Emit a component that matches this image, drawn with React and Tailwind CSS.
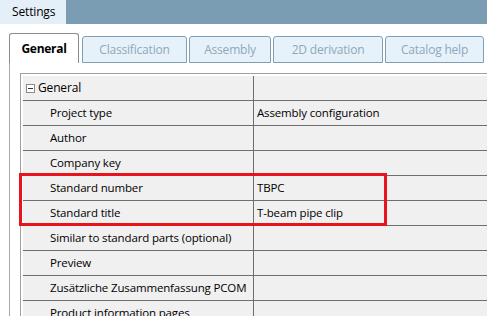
import React from 'react';

const tabs = [
  { label: 'Classification', w: 'w-[105px]' },
  { label: 'Assembly', w: 'w-[82px]' },
  { label: '2D derivation', w: 'w-[110px]' },
  { label: 'Catalog help', w: 'w-[99px]' },
];

const rows = [
  ['Project type', 'Assembly configuration'],
  ['Author', ''],
  ['Company key', ''],
  ['Standard number', 'TBPC'],
  ['Standard title', 'T-beam pipe clip'],
  ['Similar to standard parts (optional)', ''],
  ['Preview', ''],
  ['Zusätzliche Zusammenfassung PCOM', ''],
  ['Product information pages', ''],
];

function MinusBox() {
  return (
    <svg width="9" height="9" viewBox="0 0 9 9" className="shrink-0">
      <rect x="0.5" y="0.5" width="8" height="8" fill="#fff" stroke="#8a8a8a" />
      <path d="M2 4.5h5" stroke="#333" />
    </svg>
  );
}

export default function App() {
  return (
    <div
      className="relative w-[487px] h-[316px] overflow-hidden bg-white text-black text-[11.5px] tracking-[-0.15px]"
      style={{ fontFamily: '"Open Sans", "Noto Sans", sans-serif' }}
    >
      {/* top strip */}
      <div className="flex h-[24px]">
        <div className="w-[66px] bg-[#e5eff8] flex items-center pl-[12px] text-[12px]">Settings</div>
        <div className="flex-1 bg-[#7a9db3]" />
      </div>

      {/* tabs */}
      <div className="flex items-start pl-[9px] pt-[9px] h-[39px]">
        <div className="w-[70px] h-[30px] bg-white border border-b-0 border-[#8c8c8c] rounded-t-[3px] flex items-center justify-center font-bold text-[12px] tracking-[-0.3px] mr-[3px]">
          General
        </div>
        {tabs.map((t) => (
          <div
            key={t.label}
            className={`${t.w} h-[27px] mt-[3px] mr-[2px] bg-[#e6f1f9] border border-[#7f9fb6] rounded-t-[3px] flex items-center justify-center text-[#8ea8bb] text-[12px] tracking-[-0.2px]`}
          >
            {t.label}
          </div>
        ))}
      </div>

      {/* panel */}
      <div className="ml-[9px] border-l border-[#a8a8a8] pt-[10px] pl-[10px] h-[253px]">
        <div className="border-l border-t border-[#a0a0a0] bg-white pt-[2px] pl-[2px] h-full">
          <div className="flex h-[25px] border-b border-[#6e6e6e] bg-[#f0f0f0]">
            <div className="w-[230px] flex items-center gap-[3px] pl-[3px] text-[12px]">
              <MinusBox />
              <span>General</span>
            </div>
            <div className="flex-1 border-l border-[#6e6e6e]" />
          </div>
          {rows.map(([k, v]) => (
            <div key={k} className="flex h-[25px] border-b border-[#6e6e6e] bg-[#f0f0f0]">
              <div className="w-[230px] flex items-center pl-[27px] whitespace-nowrap overflow-hidden">{k}</div>
              <div className="flex-1 border-l border-[#6e6e6e] flex items-center pl-[3px] whitespace-nowrap">{v}</div>
            </div>
          ))}
        </div>
      </div>

      {/* highlight */}
      <div className="absolute left-[19px] top-[173px] w-[368px] h-[53px] border-[3px] border-[#e8141c]" />
    </div>
  );
}
